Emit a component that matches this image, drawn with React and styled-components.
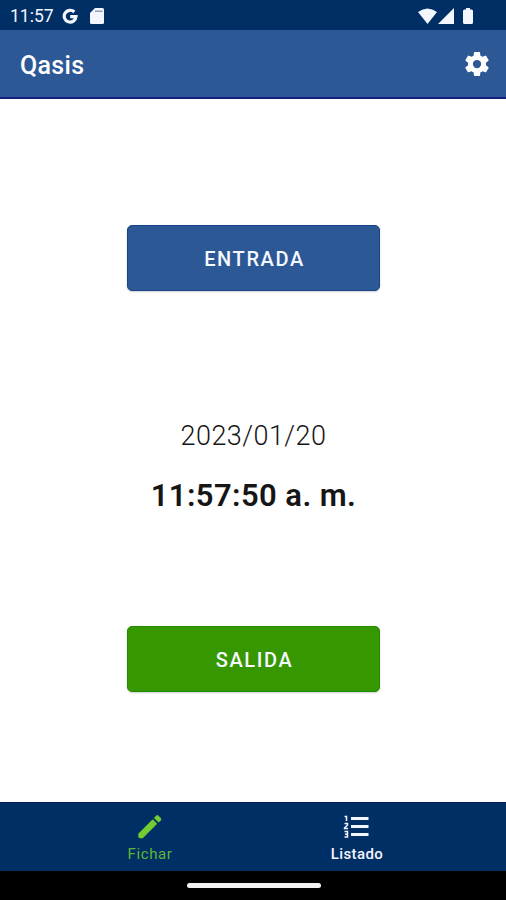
import React from 'react';
import styled, { createGlobalStyle } from 'styled-components';

const GlobalStyle = createGlobalStyle`
  *, *::before, *::after { box-sizing: border-box; }
  body { margin: 0; background: #fff; font-family: Roboto, "Liberation Sans", sans-serif; }
`;

const Screen = styled.div`
  width: 506px;
  height: 900px;
  display: flex;
  flex-direction: column;
  overflow: hidden;
  background: #fff;
`;

const StatusBar = styled.div`
  flex: none;
  height: 30px;
  display: flex;
  align-items: center;
  justify-content: space-between;
  padding: 1px 33px 0 10px;
  background: #002f65;
  color: #f3f6ff;
`;

const StatusGroup = styled.div`
  display: flex;
  align-items: center;
`;

const Clock = styled.span`
  width: 52px;
  font-size: 17.5px;
  line-height: 30px;
  white-space: nowrap;
`;

const Icon = styled.svg`
  display: block;
  flex: none;
  width: ${(p) => p.$w}px;
  height: ${(p) => p.$h}px;
  margin-left: ${(p) => p.$gap || 0}px;
  fill: currentColor;
`;

const AppBar = styled.header`
  flex: none;
  height: 69px;
  display: flex;
  align-items: center;
  justify-content: space-between;
  padding: 0 14px 0 20px;
  background: #2d5896;
  border-bottom: 2px solid #13207f;
  color: #fff;
`;

const Title = styled.h1`
  margin: 5px 0 0;
  font-size: 25px;
  line-height: 30px;
  font-weight: 500;
  letter-spacing: 0.3px;
`;

const SettingsButton = styled.button`
  padding: 0;
  border: 0;
  background: none;
  color: #fff;
`;

const Main = styled.main`
  flex: 1;
  display: flex;
  flex-direction: column;
  align-items: center;
  padding: 126px 0 0 1px;
`;

const PunchButton = styled.button`
  flex: none;
  width: 253px;
  height: 66px;
  padding: 1px 0 0 2px;
  border: 1px solid ${(p) => p.$edge};
  border-radius: 5px;
  background: ${(p) => p.$color};
  box-shadow: 0 1px 2px rgba(0, 0, 0, 0.2);
  color: #f4f8ff;
  font: 500 20px/24px Roboto, "Liberation Sans", sans-serif;
  letter-spacing: 1.6px;
`;

const Moment = styled.div`
  height: 335px;
  padding-top: 128px;
  text-align: center;
  color: #161616;
`;

const DateText = styled.div`
  font-size: 27px;
  line-height: 34px;
  font-weight: 350;
  letter-spacing: 0.45px;
`;

const TimeText = styled.div`
  margin-top: 25px;
  font-size: 31px;
  line-height: 36px;
  font-weight: 600;
  letter-spacing: 0.42px;
`;

const TabBar = styled.nav`
  flex: none;
  height: 69px;
  display: grid;
  grid-template-columns: 207px 207px;
  justify-content: center;
  background: #002f65;
  border-top: 1px solid #001c59;
`;

const Tab = styled.a`
  display: flex;
  flex-direction: column;
  align-items: center;
  padding-top: 8px;
  color: ${(p) => (p.$active ? '#72cc32' : '#f5f4ff')};
`;

const TabLabel = styled.span`
  margin: 3px 0 0 1px;
  font-size: 15px;
  line-height: 18px;
  font-weight: ${(p) => (p.$active ? 400 : 500)};
  letter-spacing: ${(p) => (p.$active ? 0.6 : 0.4)}px;
  opacity: ${(p) => (p.$active ? 0.85 : 1)};
`;

const GestureBar = styled.div`
  flex: none;
  height: 29px;
  display: flex;
  justify-content: center;
  padding: 12px 0 0 1px;
  background: #000;
`;

const GestureHandle = styled.div`
  width: 134px;
  height: 5px;
  border-radius: 3px;
  background: #f1f1f1;
`;

export default function App() {
  return (
    <>
      <GlobalStyle />
      <Screen>
        <StatusBar>
          <StatusGroup>
            <Clock>11:57</Clock>
            <Icon $w={16} $h={16} viewBox="0 0 16 16">
              <path
                d="M12.300 4A5.900 5.900 0 1 0 14 8.600H8.200"
                fill="none"
                stroke="currentColor"
                strokeWidth="3.200"
              />
            </Icon>
            <Icon $w={14} $h={16} $gap={12} viewBox="0 0 14 16">
              <path d="M5 0h7.500Q14 0 14 1.500v13q0 1.500-1.500 1.500h-11Q0 16 0 14.500V5z" />
              <path d="M5 2.500h7.500v1.500H5z" fill="#8f9eb8" />
            </Icon>
          </StatusGroup>
          <StatusGroup>
            <Icon $w={19} $h={16} viewBox="0 0 19 16">
              <path d="M0 4Q9.500-3 19 4L9.500 16z" />
            </Icon>
            <Icon $w={16} $h={16} $gap={1} viewBox="0 0 16 16">
              <path d="M16 0v16H0z" />
            </Icon>
            <Icon $w={10} $h={16} $gap={9} viewBox="0 0 10 16">
              <path d="M3 0h4v1.500h1.500q1.500 0 1.500 1.500v11.500q0 1.500-1.500 1.500h-7q-1.500 0-1.500-1.500V3q0-1.500 1.500-1.500H3z" />
            </Icon>
          </StatusGroup>
        </StatusBar>

        <AppBar>
          <Title>Qasis</Title>
          <SettingsButton aria-label="Ajustes">
            <Icon $w={30} $h={30} viewBox="0 0 24 24">
              <path d="M19.140 12.940c.040-.300.060-.610.060-.940 0-.320-.020-.640-.070-.940l2.030-1.580a.490.490 0 0 0 .120-.610l-1.920-3.320a.488.488 0 0 0-.590-.220l-2.390.960c-.500-.380-1.030-.700-1.620-.940l-.360-2.540a.484.484 0 0 0-.480-.410h-3.840c-.240 0-.430.170-.470.410l-.360 2.540c-.590.240-1.130.570-1.620.940l-2.390-.960c-.220-.080-.470 0-.590.220L2.740 8.870c-.120.210-.080.470.120.610l2.030 1.580c-.050.300-.090.630-.090.940s.020.640.070.940l-2.030 1.580a.490.490 0 0 0-.120.610l1.920 3.320c.120.220.370.290.590.220l2.390-.960c.500.380 1.030.700 1.620.940l.360 2.540c.050.240.240.410.480.410h3.840c.240 0 .440-.170.470-.410l.360-2.540c.590-.240 1.130-.560 1.620-.940l2.390.960c.220.080.470 0 .590-.220l1.920-3.320c.120-.220.070-.470-.120-.610l-2.010-1.580zM12 15.300a3.300 3.300 0 1 1 0-6.600 3.300 3.300 0 0 1 0 6.600z" />
            </Icon>
          </SettingsButton>
        </AppBar>

        <Main>
          <PunchButton $color="#2d5896" $edge="#174488">ENTRADA</PunchButton>
          <Moment>
            <DateText>2023/01/20</DateText>
            <TimeText>11:57:50 a. m.</TimeText>
          </Moment>
          <PunchButton $color="#369700" $edge="#228c00">SALIDA</PunchButton>
        </Main>

        <TabBar>
          <Tab $active>
            <Icon $w={31} $h={31} viewBox="0 0 31 31">
              <path
                d="M5 23 18.700 9.300 22.200 12.800 8.500 26.500H6Q5 26.500 5 25.500z"
                stroke="currentColor"
                strokeWidth="1.400"
                strokeLinejoin="round"
              />
              <path d="M19.900 6.900l2.200-2.200q1.200-1.200 2.400 0l2.300 2.300q1.200 1.200 0 2.400L24.600 11.600z" />
            </Icon>
            <TabLabel $active>Fichar</TabLabel>
          </Tab>
          <Tab>
            <Icon $w={31} $h={31} viewBox="0 0 31 31">
              <path d="M10 6h17.500v3H10zM10 14h17.500v3H10zM10 22h17.500v3H10z" />
              <path
                d="M3.500 5.500h2V10M3.500 12.500h3v1.500l-3 3v.500h3.500M3.500 20.500h3v5.500h-3M4 23.300h2.500"
                fill="none"
                stroke="currentColor"
                strokeWidth="1.500"
              />
            </Icon>
            <TabLabel>Listado</TabLabel>
          </Tab>
        </TabBar>
        <GestureBar>
          <GestureHandle />
        </GestureBar>
      </Screen>
    </>
  );
}
